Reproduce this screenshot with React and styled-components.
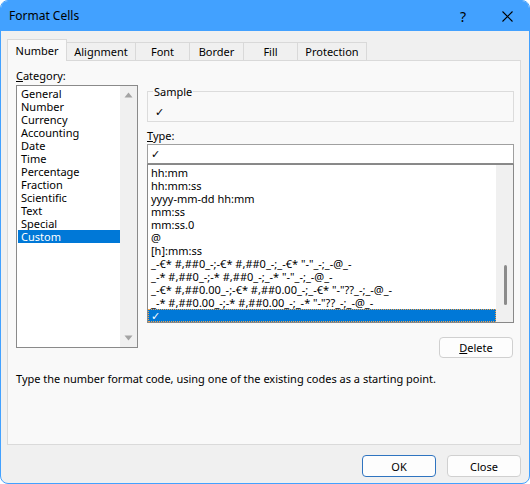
import React from 'react';
import styled, { createGlobalStyle } from 'styled-components';

const Global = createGlobalStyle`
  html, body { margin: 0; padding: 0; background: #ffffff; }
  body { font-family: "Noto Sans", "DejaVu Sans", sans-serif; font-size: 11px; color: #000; }
  * { box-sizing: border-box; }
`;

const Window = styled.div`
  width: 530px;
  height: 484px;
  border: 1px solid #42a1ff;
  border-radius: 8px;
  overflow: hidden;
  display: flex;
  flex-direction: column;
  background: #f0f0f0;
`;

const TitleBar = styled.div`
  height: 30px;
  flex: none;
  background: #42a1ff;
  display: flex;
  align-items: center;
  padding-left: 8px;
  font-size: 12px;
`;

const Title = styled.span`
  flex: 1;
  margin-top: -1px;
`;

const TitleButton = styled.div`
  width: 44px;
  height: 30px;
  display: flex;
  align-items: center;
  justify-content: center;
  font-size: 14px;
`;

const Body = styled.div`
  flex: 1;
  display: flex;
  flex-direction: column;
  padding: 8px 8px 0 6px;
`;

const TabRow = styled.div`
  display: flex;
  align-items: flex-end;
  height: 22px;
  margin-bottom: -1px;
  position: relative;
  z-index: 1;
`;

const Tab = styled.div`
  width: ${p => p.$w}px;
  height: ${p => (p.$active ? 22 : 19)}px;
  margin-left: -1px;
  &:first-child { margin-left: 0; }
  border: 1px solid #d9d9d9;
  border-bottom: ${p => (p.$active ? 'none' : '1px solid #d9d9d9')};
  background: ${p => (p.$active ? '#f9f9f9' : '#f0f0f0')};
  display: flex;
  align-items: ${p => (p.$active ? 'flex-start' : 'center')};
  padding-top: ${p => (p.$active ? 3 : 0)}px;
  justify-content: center;
  font-size: 11px;
`;

const Panel = styled.div`
  height: 385px;
  border: 1px solid #dadada;
  background: #f9f9f9;
  padding: 7px 6px 0 8px;
  display: flex;
  flex-direction: column;
`;

const Columns = styled.div`
  display: flex;
  gap: 9px;
`;

const LeftCol = styled.div`
  width: 122px;
  display: flex;
  flex-direction: column;
`;

const RightCol = styled.div`
  width: 367px;
  display: flex;
  flex-direction: column;
  padding-top: 16px;
`;

const Label = styled.div`
  line-height: 15px;
  height: 15px;
  margin-bottom: ${p => p.$mb || 0}px;
  margin-top: ${p => p.$mt || 0}px;
`;

const ListBox = styled.div`
  height: ${p => p.$h}px;
  border: 1px solid ${p => p.$border};
  background: #ffffff;
  display: flex;
  overflow: hidden;
`;

const Rows = styled.div`
  flex: 1;
  padding-top: 1px;
  padding-left: ${p => p.$pl || 0}px;
  overflow: hidden;
`;

const Row = styled.div`
  height: 13px;
  line-height: 13px;
  padding-left: 3px;
  white-space: nowrap;
  overflow: visible;
  position: relative;
  background: ${p => (p.$sel ? '#0078d7' : 'transparent')};
  color: ${p => (p.$sel ? '#ffffff' : '#000000')};
  outline: ${p => (p.$focus ? '1px dotted #f5a34a' : 'none')};
  outline-offset: -1px;
  z-index: ${p => (p.$sel ? 1 : 0)};
`;

const ScrollBar = styled.div`
  width: 17px;
  flex: none;
  background: #f0f0f0;
  display: flex;
  flex-direction: column;
  align-items: center;
  justify-content: ${p => (p.$arrows ? 'space-between' : 'flex-start')};
  padding: ${p => (p.$arrows ? '6px 0 6px' : '0')};
`;

const Thumb = styled.div`
  width: 3px;
  height: 40px;
  margin-top: 100px;
  margin-left: 1px;
  border-radius: 2px;
  background: #8b8b8b;
`;

const Fieldset = styled.fieldset`
  margin: 0;
  border: 1px solid #dcdcdc;
  padding: 5px 9px 0 7px;
  height: 38px;
`;

const Legend = styled.legend`
  padding: 0 1px;
  margin-left: -2px;
  line-height: 15px;
`;

const CheckLine = styled.div`
  line-height: 15px;
  height: 15px;
`;

const Input = styled.div`
  height: 20px;
  margin-top: 1px;
  border: 1px solid #a0a0a0;
  border-bottom-color: #8a8a8a;
  background: #fff;
  padding-left: 3px;
  line-height: 17px;
`;

const ButtonRow = styled.div`
  display: flex;
  justify-content: flex-end;
  gap: ${p => p.$gap || 0}px;
  margin-top: ${p => p.$mt || 0}px;
  padding-right: ${p => p.$pr || 0}px;
`;

const Button = styled.div`
  width: 74px;
  height: ${p => p.$h || 21}px;
  border: 1px solid ${p => (p.$primary ? '#2f74c0' : '#d0d0d0')};
  border-radius: 4px;
  background: #fdfdfd;
  display: flex;
  align-items: center;
  justify-content: center;
  font-size: 11px;
`;

const Description = styled.div`
  margin-top: 13px;
  line-height: 15px;
`;

const Footer = styled.div`
  display: flex;
  justify-content: flex-end;
  gap: 11px;
  padding-top: 10px;
`;

const Arrow = ({ down }) => (
  <svg width="9" height="6" viewBox="0 0 9 6">
    {down ? (
      <path d="M0.5 0.5 L8.5 0.5 L4.5 5.5 Z" fill="#a3a3a3" />
    ) : (
      <path d="M0.5 5.5 L8.5 5.5 L4.5 0.5 Z" fill="#a3a3a3" />
    )}
  </svg>
);

const categories = [
  'General', 'Number', 'Currency', 'Accounting', 'Date', 'Time',
  'Percentage', 'Fraction', 'Scientific', 'Text', 'Special', 'Custom',
];

const types = [
  'hh:mm',
  'hh:mm:ss',
  'yyyy-mm-dd hh:mm',
  'mm:ss',
  'mm:ss.0',
  '@',
  '[h]:mm:ss',
  '_-€* #,##0_-;-€* #,##0_-;_-€* "-"_-;_-@_-',
  '_-* #,##0_-;-* #,##0_-;_-* "-"_-;_-@_-',
  '_-€* #,##0.00_-;-€* #,##0.00_-;_-€* "-"??_-;_-@_-',
  '_-* #,##0.00_-;-* #,##0.00_-;_-* "-"??_-;_-@_-',
];

const tabs = [
  ['Number', 60, true],
  ['Alignment', 70],
  ['Font', 55],
  ['Border', 55],
  ['Fill', 55],
  ['Protection', 70],
];

export default function App() {
  return (
    <>
      <Global />
      <Window>
        <TitleBar>
          <Title>Format Cells</Title>
          <TitleButton>?</TitleButton>
          <TitleButton>
            <svg width="11" height="11" viewBox="0 0 11 11">
              <path d="M0.5 0.5 L10.5 10.5 M10.5 0.5 L0.5 10.5" stroke="#000" strokeWidth="1.1" />
            </svg>
          </TitleButton>
        </TitleBar>
        <Body>
          <TabRow>
            {tabs.map(([t, w, a]) => (
              <Tab key={t} $w={w} $active={a}>{t}</Tab>
            ))}
          </TabRow>
          <Panel>
            <Columns>
              <LeftCol>
                <Label $mb={2}><u>C</u>ategory:</Label>
                <ListBox $h={263} $border="#8a8a8a">
                  <Rows $pl={1}>
                    {categories.map(c => (
                      <Row key={c} $sel={c === 'Custom'}>{c}</Row>
                    ))}
                  </Rows>
                  <ScrollBar $arrows>
                    <Arrow />
                    <Arrow down />
                  </ScrollBar>
                </ListBox>
              </LeftCol>
              <RightCol>
                <Fieldset>
                  <Legend>Sample</Legend>
                  <CheckLine>✓</CheckLine>
                </Fieldset>
                <Label $mt={6}><u>T</u>ype:</Label>
                <Input>✓</Input>
                <ListBox $h={159} $border="#888888">
                  <Rows>
                    {types.map(t => (
                      <Row key={t}>{t}</Row>
                    ))}
                    <Row $sel $focus>✓</Row>
                  </Rows>
                  <ScrollBar>
                    <Thumb />
                  </ScrollBar>
                </ListBox>
                <ButtonRow $mt={14} $pr={1}>
                  <Button><span><u>D</u>elete</span></Button>
                </ButtonRow>
              </RightCol>
            </Columns>
            <Description>
              Type the number format code, using one of the existing codes as a starting point.
            </Description>
          </Panel>
          <Footer>
            <Button $primary $h={22}>OK</Button>
            <Button $h={22}>Close</Button>
          </Footer>
        </Body>
      </Window>
    </>
  );
}
